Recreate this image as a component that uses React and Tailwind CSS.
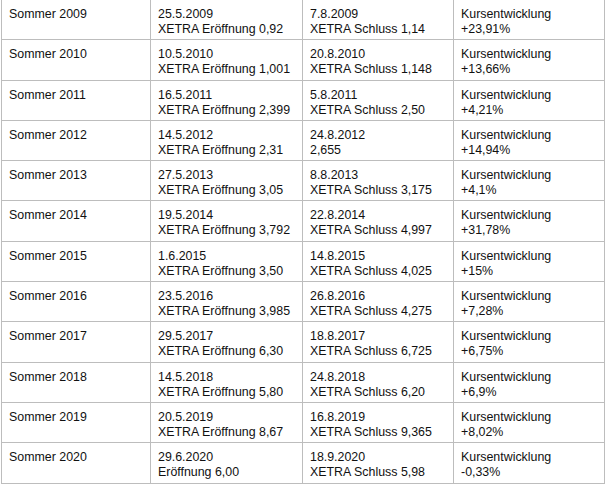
import React from "react";

const rows = [
  ["Sommer 2009", "25.5.2009", "XETRA Eröffnung 0,92", "7.8.2009", "XETRA Schluss 1,14", "+23,91%"],
  ["Sommer 2010", "10.5.2010", "XETRA Eröffnung 1,001", "20.8.2010", "XETRA Schluss 1,148", "+13,66%"],
  ["Sommer 2011", "16.5.2011", "XETRA Eröffnung 2,399", "5.8.2011", "XETRA Schluss 2,50", "+4,21%"],
  ["Sommer 2012", "14.5.2012", "XETRA Eröffnung 2,31", "24.8.2012", "2,655", "+14,94%"],
  ["Sommer 2013", "27.5.2013", "XETRA Eröffnung 3,05", "8.8.2013", "XETRA Schluss 3,175", "+4,1%"],
  ["Sommer 2014", "19.5.2014", "XETRA Eröffnung 3,792", "22.8.2014", "XETRA Schluss 4,997", "+31,78%"],
  ["Sommer 2015", "1.6.2015", "XETRA Eröffnung 3,50", "14.8.2015", "XETRA Schluss 4,025", "+15%"],
  ["Sommer 2016", "23.5.2016", "XETRA Eröffnung 3,985", "26.8.2016", "XETRA Schluss 4,275", "+7,28%"],
  ["Sommer 2017", "29.5.2017", "XETRA Eröffnung 6,30", "18.8.2017", "XETRA Schluss 6,725", "+6,75%"],
  ["Sommer 2018", "14.5.2018", "XETRA Eröffnung 5,80", "24.8.2018", "XETRA Schluss 6,20", "+6,9%"],
  ["Sommer 2019", "20.5.2019", "XETRA Eröffnung 8,67", "16.8.2019", "XETRA Schluss 9,365", "+8,02%"],
  ["Sommer 2020", "29.6.2020", "Eröffnung 6,00", "18.9.2020", "XETRA Schluss 5,98", "-0,33%"],
];

const cell = "h-[40.3px] border-r border-b border-[#bdbdbd] pl-[7px] pt-[7px] leading-[15px]";

const App = () => {
  return (
    <div className="min-h-screen bg-white overflow-hidden font-['Liberation_Sans',Arial,sans-serif] text-[12.4px] text-[#111]">
      <div className="-mt-px ml-px grid grid-cols-[149px_152px_151px_151px] w-[603px] border-l border-t border-[#bdbdbd]">
        {rows.map((r) => (
          <React.Fragment key={r[0]}>
            <div className={cell}>{r[0]}</div>
            <div className={cell}>
              <div>{r[1]}</div>
              <div>{r[2]}</div>
            </div>
            <div className={cell}>
              <div>{r[3]}</div>
              <div>{r[4]}</div>
            </div>
            <div className={cell}>
              <div>Kursentwicklung</div>
              <div>{r[5]}</div>
            </div>
          </React.Fragment>
        ))}
      </div>
    </div>
  );
};

export default App;
